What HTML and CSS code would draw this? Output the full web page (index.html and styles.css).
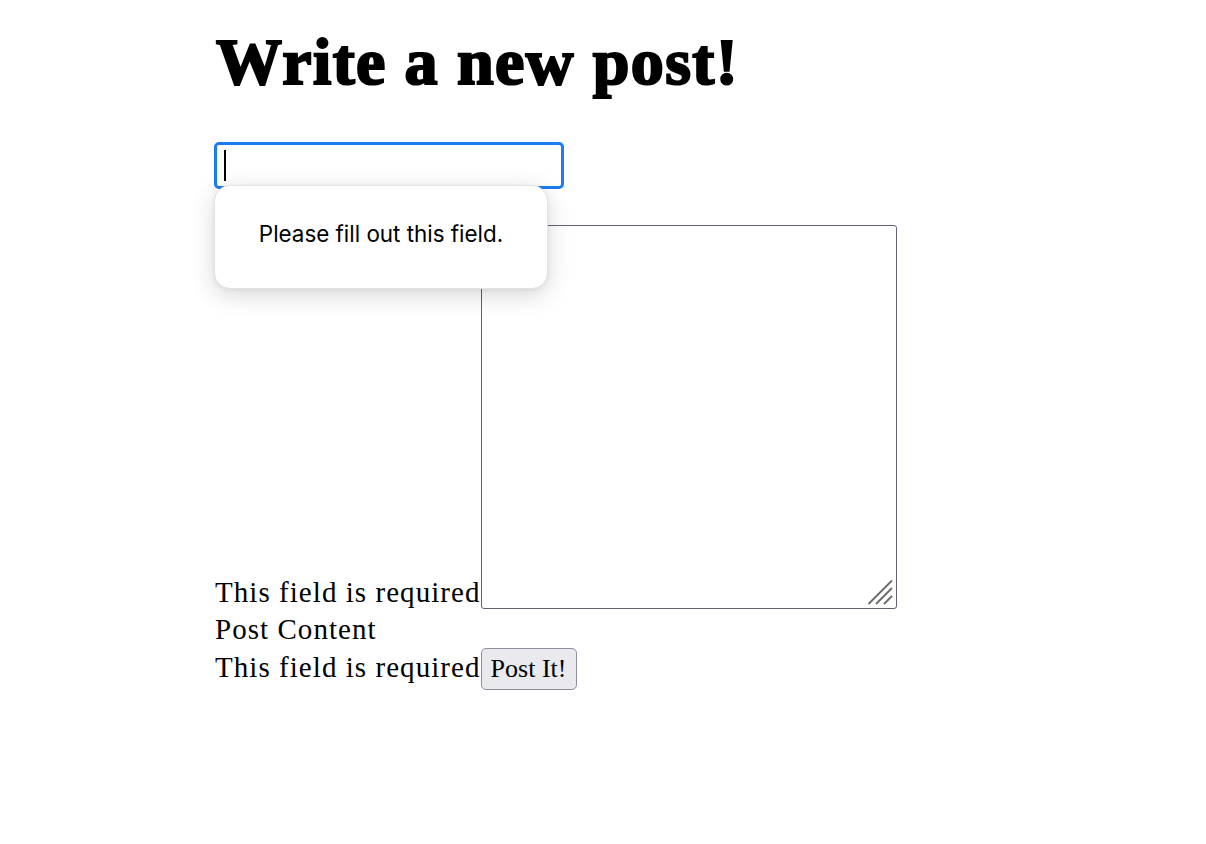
FILE: index.html
```html
<!DOCTYPE html>
<html lang="en">
<head>
<meta charset="utf-8">
<title>Write a new post!</title>
<link rel="stylesheet" href="styles.css">
</head>
<body>
<main class="page">
  <h1 class="title">Write a new post!</h1>
  <form class="post-form">
    <div class="row row-input">
      <span class="input-wrap">
        <input class="title-input" type="text" aria-label="Post Title">
        <span class="caret"></span>
        <div class="tooltip">Please fill out this field.</div>
      </span>
    </div>
    <div class="row">Post Title</div>
    <div class="row">This field is required<span class="area-wrap"><textarea class="content" aria-label="Post Content"></textarea><svg class="grip" width="26" height="26" viewBox="0 0 26 26" aria-hidden="true"><path d="M1.5 25 L25 1.5 M9 25 L25 9 M17 25 L25 17" stroke="#6a6a6a" stroke-width="1.8" fill="none"/></svg></span></div>
    <div class="row">Post Content</div>
    <div class="row">This field is required<button type="button" class="submit">Post It!</button></div>
  </form>
</main>
</body>
</html>
```

FILE: styles.css
```css
html, body {
  margin: 0;
  padding: 0;
  background: #ffffff;
}

body {
  font-family: "Liberation Serif", "Times New Roman", serif;
  color: #000;
}

.page {
  width: 776px;
  margin: 0 auto;
  padding-top: 22px;
}

.title {
  margin: 0;
  font-family: "Liberation Serif", serif;
  font-weight: 700;
  font-size: 66px;
  line-height: 80px;
  letter-spacing: 1.4px;
  -webkit-text-stroke: 2.2px #000;
  padding-left: 1px;
}

.post-form {
  margin-top: 40px;
  font-size: 29px;
  letter-spacing: 1.05px;
  line-height: 37.5px;
}

.row {
  display: block;
}

.row-input {
  height: 45px;
  line-height: 45px;
}

.input-wrap {
  position: relative;
  display: inline-block;
  vertical-align: top;
  margin-left: -1px;
}

.title-input {
  box-sizing: border-box;
  width: 350px;
  height: 47px;
  margin: 0;
  border: 3px solid #1b7cf3;
  border-radius: 5px;
  outline: none;
  background: #fff;
  padding: 0 8px;
  display: block;
}

.caret {
  position: absolute;
  left: 10px;
  top: 8px;
  width: 2px;
  height: 31px;
  background: #000;
}

.tooltip {
  position: absolute;
  left: 0;
  top: 43px;
  width: 334px;
  height: 104px;
  box-sizing: border-box;
  padding-bottom: 6px;
  background: #fff;
  border: 1px solid #e3e3e6;
  border-radius: 16px;
  box-shadow: 0 6px 24px rgba(0, 0, 0, 0.16), 0 1px 4px rgba(0, 0, 0, 0.06);
  font-family: "Inter", "Noto Sans", sans-serif;
  font-size: 22.4px;
  letter-spacing: 0;
  line-height: 26px;
  color: #000;
  display: flex;
  align-items: center;
  justify-content: center;
  z-index: 10;
}

.area-wrap {
  position: relative;
  display: inline-block;
  vertical-align: -7.5px;
  margin-left: 0;
  line-height: 0;
}

.content {
  box-sizing: border-box;
  display: block;
  width: 416px;
  height: 384px;
  margin: 0;
  border: 1.6px solid #626173;
  border-radius: 3px;
  background: #fff;
  resize: none;
  font: inherit;
}

.grip {
  position: absolute;
  right: 4px;
  bottom: 4px;
}

.submit {
  box-sizing: border-box;
  height: 42px;
  width: 96px;
  margin: 0;
  padding: 0 6px;
  font-family: "Liberation Serif", serif;
  font-size: 26px;
  letter-spacing: 0;
  color: #000;
  background: #e9e9ee;
  border: 1.5px solid #8f8f9d;
  border-radius: 5px;
  vertical-align: baseline;
}
```
